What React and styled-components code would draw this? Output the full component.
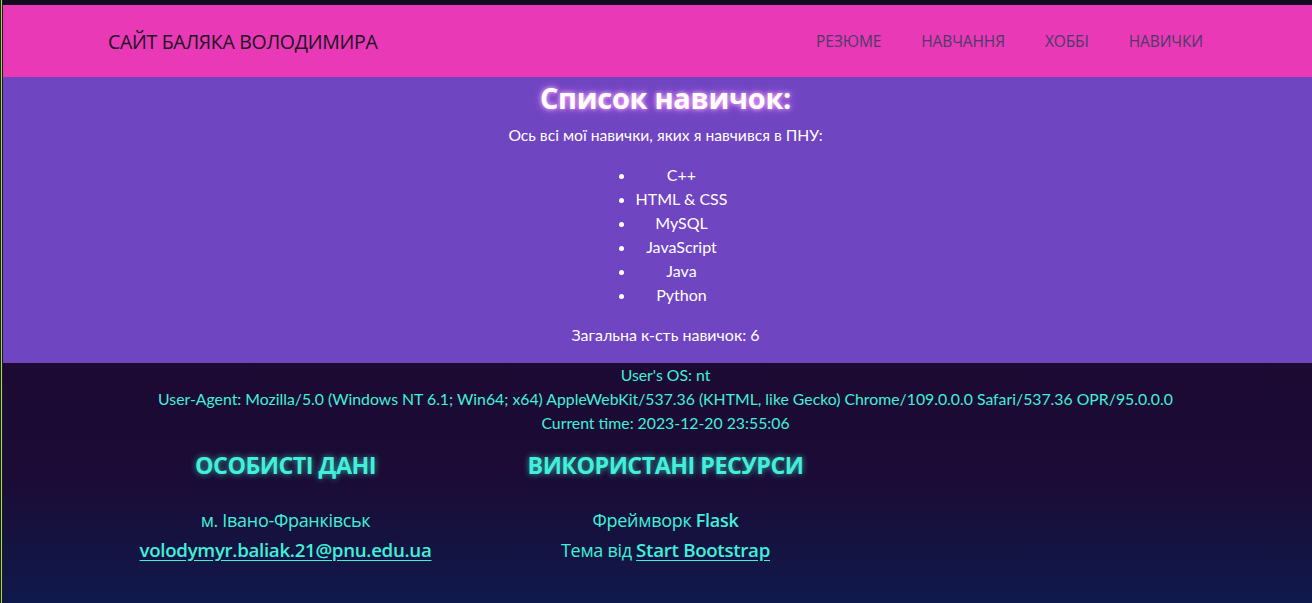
import React from 'react';
import styled, { createGlobalStyle } from 'styled-components';

const GlobalStyle = createGlobalStyle`
  html, body {
    margin: 0;
    padding: 0;
    background: #130a20;
  }
  body {
    font-family: 'Lato', 'Liberation Sans', sans-serif;
  }
`;

const Page = styled.div`
  min-height: 603px;
  padding-top: 5px;
  padding-left: 3px;
  box-sizing: border-box;
  display: flex;
  flex-direction: column;
  background: linear-gradient(
    to right,
    #1a1a1a 0 1px,
    #a9e02a 1px 2px,
    #1a1a1a 2px 3px,
    transparent 3px
  ), #130a20;
`;

const Navbar = styled.nav`
  height: 72px;
  background: #e939b7;
  display: flex;
  align-items: center;
  justify-content: space-between;
  padding: 0 109px 0 105px;
`;

const Brand = styled.a`
  font-family: 'Open Sans', 'Noto Sans', sans-serif;
  font-size: 19.5px;
  color: #1a1220;
  letter-spacing: -0.3px;
  text-decoration: none;
`;

const NavList = styled.ul`
  list-style: none;
  display: flex;
  gap: 40px;
  margin: 0;
  padding: 0;
`;

const NavItem = styled.li`
  font-family: 'Open Sans', 'Noto Sans', sans-serif;
  font-size: 15.5px;
  color: #4b3b66;
  letter-spacing: -0.1px;
`;

const Skills = styled.section`
  background: #7045c2;
  color: #fff;
  text-align: center;
  padding: 3px 0 16px 16px;
`;

const Title = styled.h1`
  font-family: 'Open Sans', 'Noto Sans', sans-serif;
  font-weight: 700;
  font-size: 29px;
  line-height: 36px;
  margin: 0;
  letter-spacing: -0.3px;
  text-shadow: 0 0 4px #ffb3f3, 0 0 8px #d27dff;
`;

const Lead = styled.p`
  font-size: 15.7px;
  line-height: 24px;
  margin: 7px 0 16px;
`;

const SkillList = styled.ul`
  display: inline-block;
  margin: 0;
  padding: 0 0 0 32px;
  text-align: center;
`;

const SkillItem = styled.li`
  font-size: 16px;
  line-height: 24px;
`;

const Total = styled.p`
  font-size: 16px;
  line-height: 24px;
  margin: 16px 0 0;
`;

const Footer = styled.footer`
  flex: 1;
  background: linear-gradient(to bottom, #1c0a33 0%, #1b0b35 45%, #10194b 100%);
  color: #41f0d9;
  text-align: center;
  padding: 0 0 24px 16px;
`;

const InfoLine = styled.div`
  font-size: 15.8px;
  line-height: 24px;
`;

const Columns = styled.div`
  width: 1140px;
  margin: 15px auto 0;
  display: grid;
  grid-template-columns: repeat(3, 1fr);
`;

const Column = styled.div`
  text-align: center;
`;

const ColumnTitle = styled.h4`
  font-family: 'Open Sans', 'Noto Sans', sans-serif;
  font-weight: 700;
  font-size: 23.3px;
  line-height: 30px;
  margin: 0 0 26px;
  letter-spacing: -0.5px;
  text-shadow: 0 0 6px rgba(65, 240, 217, 0.7);
`;

const ColumnText = styled.p`
  font-family: 'Open Sans', 'Noto Sans', sans-serif;
  font-size: 18px;
  line-height: 29px;
  margin: 0;
  letter-spacing: -0.3px;
`;

const Strong = styled.b`
  font-weight: 600;
`;

const Link = styled.a`
  color: #41f0d9;
  font-size: 18.7px;
  font-weight: 600;
  text-decoration: underline;
  text-underline-offset: 3px;
`;

const skills = ['C++', 'HTML & CSS', 'MySQL', 'JavaScript', 'Java', 'Python'];
const links = ['РЕЗЮМЕ', 'НАВЧАННЯ', 'ХОББІ', 'НАВИЧКИ'];

const App = () => (
  <>
    <GlobalStyle />
    <Page>
      <Navbar>
        <Brand href="#">САЙТ БАЛЯКА ВОЛОДИМИРА</Brand>
        <NavList>
          {links.map((l) => (
            <NavItem key={l}>{l}</NavItem>
          ))}
        </NavList>
      </Navbar>
      <Skills>
        <Title>Список навичок:</Title>
        <Lead>Ось всі мої навички, яких я навчився в ПНУ:</Lead>
        <SkillList>
          {skills.map((s) => (
            <SkillItem key={s}>{s}</SkillItem>
          ))}
        </SkillList>
        <Total>Загальна к-сть навичок: {skills.length}</Total>
      </Skills>
      <Footer>
        <InfoLine>User&apos;s OS: nt</InfoLine>
        <InfoLine>
          User-Agent: Mozilla/5.0 (Windows NT 6.1; Win64; x64) AppleWebKit/537.36 (KHTML, like Gecko) Chrome/109.0.0.0 Safari/537.36 OPR/95.0.0.0
        </InfoLine>
        <InfoLine>Current time: 2023-12-20 23:55:06</InfoLine>
        <Columns>
          <Column>
            <ColumnTitle>ОСОБИСТІ ДАНІ</ColumnTitle>
            <ColumnText>м. Івано-Франківськ</ColumnText>
            <ColumnText>
              <Link href="#">volodymyr.baliak.21@pnu.edu.ua</Link>
            </ColumnText>
          </Column>
          <Column>
            <ColumnTitle>ВИКОРИСТАНІ РЕСУРСИ</ColumnTitle>
            <ColumnText>
              Фреймворк <Strong>Flask</Strong>
            </ColumnText>
            <ColumnText>
              Тема від <Link href="#">Start Bootstrap</Link>
            </ColumnText>
          </Column>
          <Column />
        </Columns>
      </Footer>
    </Page>
  </>
);

export default App;
